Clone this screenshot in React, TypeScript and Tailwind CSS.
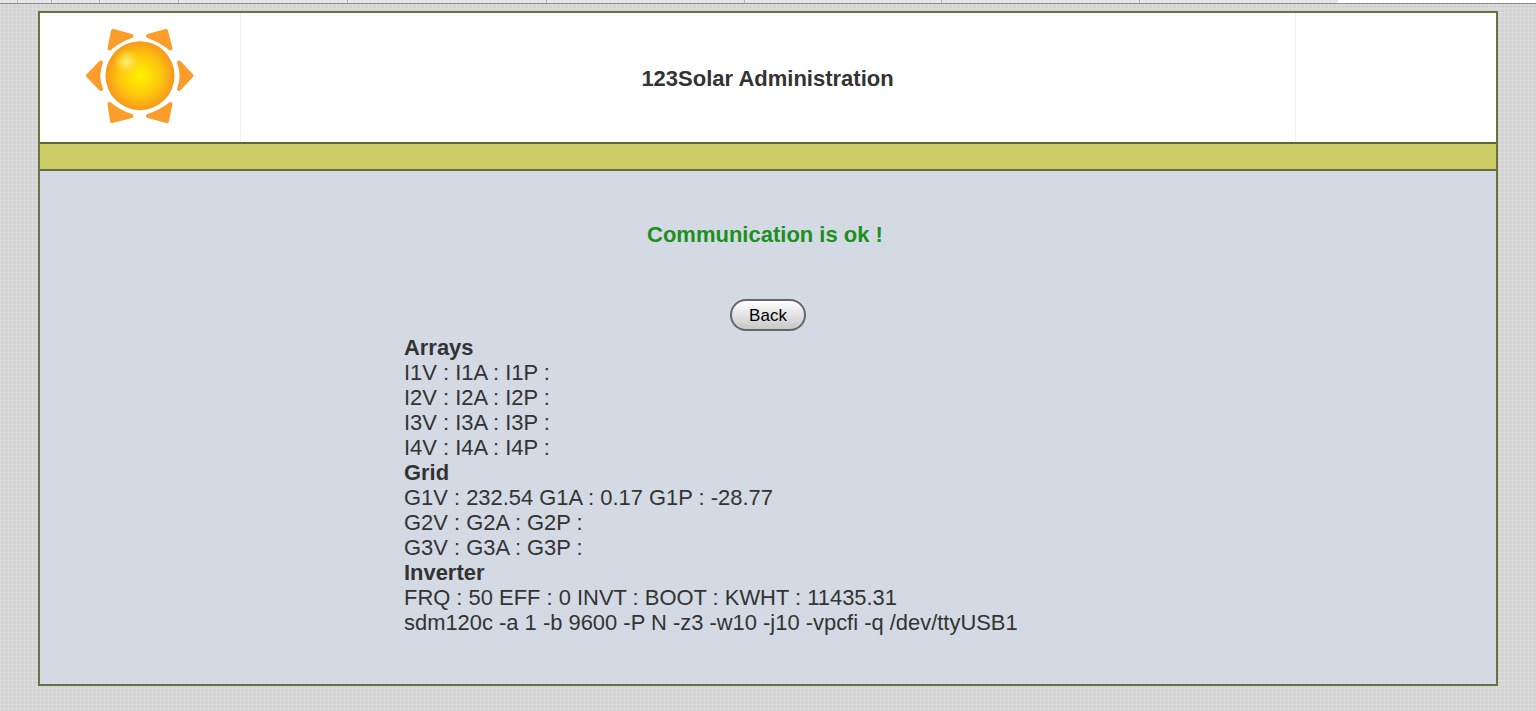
import React from "react";

const Sun: React.FC = () => (
  <svg width="112" height="100" viewBox="0 0 112 100">
    <defs>
      <radialGradient id="sunBody" cx="50%" cy="50%" r="50%">
        <stop offset="0%" stopColor="#fff200" />
        <stop offset="60%" stopColor="#fdc70c" />
        <stop offset="100%" stopColor="#f7981d" />
      </radialGradient>
      <radialGradient id="sunShine" cx="50%" cy="50%" r="50%">
        <stop offset="0%" stopColor="#ffee70" />
        <stop offset="45%" stopColor="#ffdc40" />
        <stop offset="100%" stopColor="#ffd21f" stopOpacity="0" />
      </radialGradient>
    </defs>
    <g fill="#fb9d2b" stroke="#fb9d2b" strokeWidth="4" strokeLinejoin="round">
      <path d="M29 5 L47.5 10 Q34 14.5 25.5 22.5 Z" />
      <path d="M82 5 L64 10 Q77 14.5 86.5 22.5 Z" />
      <path d="M28 95 L47.5 90 Q34 85.5 25.5 78 Z" />
      <path d="M83 95 L64 90 Q77 85.5 86.5 78 Z" />
      <path d="M4 49.7 L17 36.5 Q11.5 49.7 17 63 Z" />
      <path d="M107.5 49.7 L95 36.5 Q100 49.7 95 63 Z" />
    </g>
    <circle cx="56" cy="49.7" r="34.5" fill="url(#sunBody)" />
    <circle cx="43" cy="36" r="13" fill="url(#sunShine)" />
  </svg>
);

const Row: React.FC<{ bold?: boolean; children: React.ReactNode }> = ({ bold, children }) => (
  <div className={bold ? "font-bold h-[25px]" : "h-[25px]"}>{children}</div>
);

const tabs = [18, 34, 48, 79, 169, 199, 198, 197, 198];

export default function App() {
  return (
    <div className="h-[711px] overflow-hidden bg-[#d3d3d3] bg-[linear-gradient(#dcdcdc_1px,transparent_1px),linear-gradient(90deg,#dcdcdc_1px,transparent_1px)] bg-[length:4px_4px] font-['Liberation_Sans',Arial,sans-serif] text-[#333333]">
      <div className="flex h-[4px] bg-white border-b border-[#8c8c8c]">
        {tabs.map((w, i) => (
          <div key={i} className="bg-[#e6e6e8] border-r border-[#b4b4b4]" style={{ width: w }} />
        ))}
        <div className="w-[198px] bg-[#e6e6e8]" />
      </div>
      <div className="mx-[38px] mt-[7px] w-[1460px] border-2 border-[#6b7140]">
        <div className="flex h-[131px] bg-white border-b-2 border-[#5f6538]">
          <div className="w-[201px] shrink-0 flex items-center justify-center border-r border-[#f0f0f0] pb-[3px]">
            <Sun />
          </div>
          <div className="flex-1 flex items-center justify-center pt-[2px] pr-[1px]">
            <h1 className="text-[22px] font-bold">123Solar Administration</h1>
          </div>
          <div className="w-[201px] shrink-0 border-l border-[#f0f0f0]" />
        </div>
        <div className="h-[27px] bg-[#cccc66] border-b-2 border-[#6b7140]" />
        <div className="h-[513px] bg-[#d3dae3] flex flex-col">
          <p className="mt-[50px] pr-[6px] text-center text-[22px] font-bold leading-[28px] text-[#1e8e1e]">
            Communication is ok !
          </p>
          <div className="mt-[50px] flex justify-center">
            <button className="h-[32px] w-[76px] pt-[2px] rounded-full border-2 border-[#666666] bg-gradient-to-b from-[#ffffff] to-[#c8c8c8] text-[17px] text-black">
              Back
            </button>
          </div>
          <div className="mt-[4px] ml-[364px] text-[21.93px] leading-[25px]">
            <Row bold>Arrays</Row>
            <Row>I1V : I1A : I1P :</Row>
            <Row>I2V : I2A : I2P :</Row>
            <Row>I3V : I3A : I3P :</Row>
            <Row>I4V : I4A : I4P :</Row>
            <Row bold>Grid</Row>
            <Row>G1V : 232.54 G1A : 0.17 G1P : -28.77</Row>
            <Row>G2V : G2A : G2P :</Row>
            <Row>G3V : G3A : G3P :</Row>
            <Row bold>Inverter</Row>
            <Row>FRQ : 50 EFF : 0 INVT : BOOT : KWHT : 11435.31</Row>
            <Row>sdm120c -a 1 -b 9600 -P N -z3 -w10 -j10 -vpcfi -q /dev/ttyUSB1</Row>
          </div>
        </div>
      </div>
    </div>
  );
}
